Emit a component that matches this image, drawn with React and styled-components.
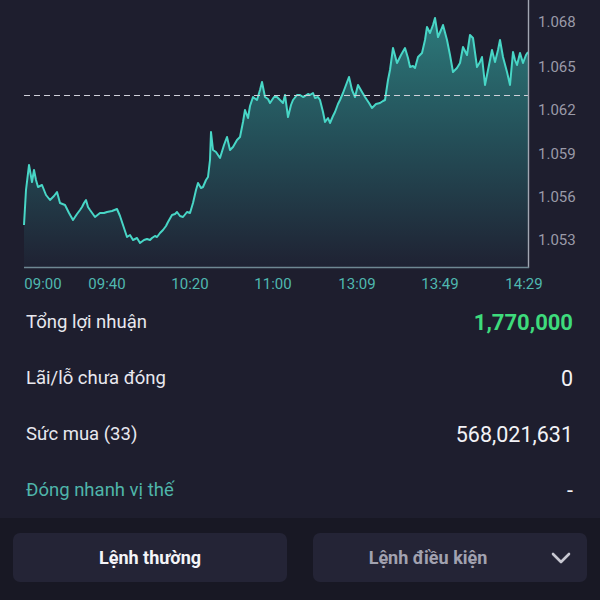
import React from 'react';
import styled, { createGlobalStyle } from 'styled-components';

//==============================Global===========================
const GlobalStyle = createGlobalStyle`
  body {
    margin: 0;
    background: #1e1e2e;
    font-family: Roboto, "Liberation Sans", sans-serif;
  }
`;

//==============================Styled Components===========================
let Page = styled.div`
  width: 600px;
  height: 600px;
  display: flex;
  flex-direction: column;
  background: #1e1e2e;
  overflow: hidden;
`;

let ChartBox = styled.div`
  height: 294px;
  flex-shrink: 0;
  svg {
    display: block;
  }
`;

let StatList = styled.div`
  display: flex;
  flex-direction: column;
  padding: 0 27px 0 26px;
`;

let StatRow = styled.div`
  height: 56px;
  display: flex;
  align-items: center;
  justify-content: space-between;
`;

let Label = styled.span`
  font-size: 18.5px;
  color: ${p => (p.accent ? '#4fb5aa' : '#e8e8ee')};
`;

let Value = styled.span`
  font-size: ${p => (p.positive ? '22px' : '21.5px')};
  font-weight: ${p => (p.positive ? 700 : 400)};
  color: ${p => (p.positive ? '#3edb7c' : '#f2f2f6')};
`;

let BottomBar = styled.div`
  flex: 1;
  background: #181824;
  display: grid;
  grid-template-columns: 1fr 1fr;
  gap: 26px;
  padding: 15px 13px 0;
  align-items: start;
`;

let TabButton = styled.button`
  height: 49px;
  border: none;
  border-radius: 7px;
  background: #242436;
  color: ${p => (p.active ? '#f4f4f8' : '#a2a2b0')};
  font-family: Roboto, "Liberation Sans", sans-serif;
  font-size: 18px;
  font-weight: 700;
  display: flex;
  align-items: center;
  justify-content: center;
  padding: 0 ${p => (p.withMenu ? '44px' : '0')} 0 0;
  position: relative;
  cursor: pointer;
`;

let Chevron = styled.svg`
  position: absolute;
  right: 16px;
  top: 19px;
`;

//==============================Chart data===========================
const points = [
  [24, 225], [26, 190], [29, 165], [32, 182], [34, 170], [36, 180], [38, 187], [42, 185], [46, 195], [50, 200],
  [54, 196], [57, 192], [60, 203], [65, 205], [69, 213], [73, 220], [77, 214], [80, 210], [82, 207], [84, 203],
  [86, 200], [88, 207], [90, 210], [95, 217], [100, 213], [104, 213], [107, 212], [112, 211], [117, 209],
  [120, 216], [124, 228], [127, 237], [130, 235], [133, 240], [137, 238], [140, 243], [144, 240], [147, 239],
  [150, 240], [152, 238], [155, 236], [157, 237], [160, 233], [163, 230], [166, 226], [168, 222], [172, 215],
  [175, 214], [177, 212], [180, 216], [183, 217], [187, 212], [190, 213], [193, 203], [196, 190], [198, 183],
  [201, 188], [203, 187], [206, 180], [208, 177], [210, 160], [211, 132], [213, 150], [216, 152], [220, 158],
  [224, 145], [227, 137], [230, 150], [233, 147], [237, 140], [240, 137], [243, 122], [245, 110], [248, 118],
  [250, 106], [253, 97], [257, 100], [260, 90], [262, 82], [265, 97], [268, 99], [270, 103], [274, 97],
  [277, 97], [280, 100], [283, 103], [285, 95], [288, 117], [291, 105], [293, 100], [297, 95], [300, 95],
  [303, 97], [305, 96], [308, 94], [310, 95], [313, 93], [315, 98], [318, 97], [320, 100], [323, 112],
  [325, 122], [328, 118], [330, 123], [333, 116], [335, 112], [338, 104], [340, 100], [343, 93], [346, 85],
  [349, 77], [352, 90], [355, 97], [358, 85], [362, 92], [365, 97], [369, 103], [372, 108], [376, 104],
  [380, 103], [383, 101], [385, 100], [388, 80], [390, 70], [393, 48], [397, 63], [401, 55], [405, 48],
  [408, 58], [410, 67], [413, 66], [415, 68], [418, 57], [422, 53], [425, 40], [427, 27], [430, 33], [433, 25],
  [435, 18], [438, 37], [441, 30], [443, 25], [447, 40], [450, 55], [453, 72], [457, 68], [460, 63], [463, 47],
  [467, 55], [470, 35], [473, 38], [477, 67], [480, 62], [482, 57], [485, 85], [488, 70], [490, 60], [492, 50],
  [495, 62], [498, 50], [500, 40], [503, 57], [507, 72], [510, 85], [513, 52], [515, 60], [517, 65], [520, 53],
  [523, 63], [526, 55], [528, 52],
];

const yTicks = [
  { label: '1.068', y: 21 },
  { label: '1.065', y: 66 },
  { label: '1.062', y: 109 },
  { label: '1.059', y: 153 },
  { label: '1.056', y: 196 },
  { label: '1.053', y: 239 },
];

const xTicks = [
  { label: '09:00', x: 43 },
  { label: '09:40', x: 107 },
  { label: '10:20', x: 190 },
  { label: '11:00', x: 273 },
  { label: '13:09', x: 357 },
  { label: '13:49', x: 440 },
  { label: '14:29', x: 524 },
];

const stats = [
  { label: 'Tổng lợi nhuận', value: '1,770,000', positive: true },
  { label: 'Lãi/lỗ chưa đóng', value: '0' },
  { label: 'Sức mua (33)', value: '568,021,631' },
  { label: 'Đóng nhanh vị thế', value: '-', accent: true },
];

function PriceChart() {
  const line = points.map(([x, y], i) => `${i ? 'L' : 'M'}${x} ${y}`).join(' ');
  const area = `${line} L528 268 L24 268 Z`;

  return (
    <svg width="600" height="294" viewBox="0 0 600 294">
      <defs>
        <linearGradient id="areaFill" x1="0" y1="20" x2="0" y2="268" gradientUnits="userSpaceOnUse">
          <stop offset="0" stopColor="#2d7e7e" stopOpacity="0.95" />
          <stop offset="0.45" stopColor="#25575f" stopOpacity="0.9" />
          <stop offset="1" stopColor="#1f2233" stopOpacity="0.9" />
        </linearGradient>
      </defs>
      <path d={area} fill="url(#areaFill)" />
      <path d={line} fill="none" stroke="#48d6c6" strokeWidth="2" strokeLinejoin="round" />
      <line x1="24" y1="95.5" x2="528" y2="95.5" stroke="#cfcfd8" strokeWidth="1.2" strokeDasharray="6 4" />
      <line x1="528.5" y1="0" x2="528.5" y2="268" stroke="#a2a6b2" strokeWidth="1.4" />
      <line x1="24" y1="267.5" x2="529" y2="267.5" stroke="#6f8893" strokeWidth="1.4" />
      {yTicks.map(t => (
        <text key={t.label} x="538" y={t.y + 5.5} fill="#9a9aa8" fontSize="15" fontFamily="Roboto, sans-serif">
          {t.label}
        </text>
      ))}
      {xTicks.map(t => (
        <text key={t.label} x={t.x} y="288.5" fill="#4fb8b0" fontSize="15" textAnchor="middle" fontFamily="Roboto, sans-serif">
          {t.label}
        </text>
      ))}
    </svg>
  );
}

export default function App() {
  return (
    <Page>
      <GlobalStyle />
      <ChartBox>
        <PriceChart />
      </ChartBox>
      <StatList>
        {stats.map(s => (
          <StatRow key={s.label}>
            <Label accent={s.accent}>{s.label}</Label>
            <Value positive={s.positive}>{s.value}</Value>
          </StatRow>
        ))}
      </StatList>
      <BottomBar>
        <TabButton active>Lệnh thường</TabButton>
        <TabButton withMenu>
          Lệnh điều kiện
          <Chevron width="20" height="12" viewBox="0 0 20 12">
            <polyline points="2,2 10,10 18,2" fill="none" stroke="#c8c8d2" strokeWidth="2.6" strokeLinecap="round" strokeLinejoin="round" />
          </Chevron>
        </TabButton>
      </BottomBar>
    </Page>
  );
}
